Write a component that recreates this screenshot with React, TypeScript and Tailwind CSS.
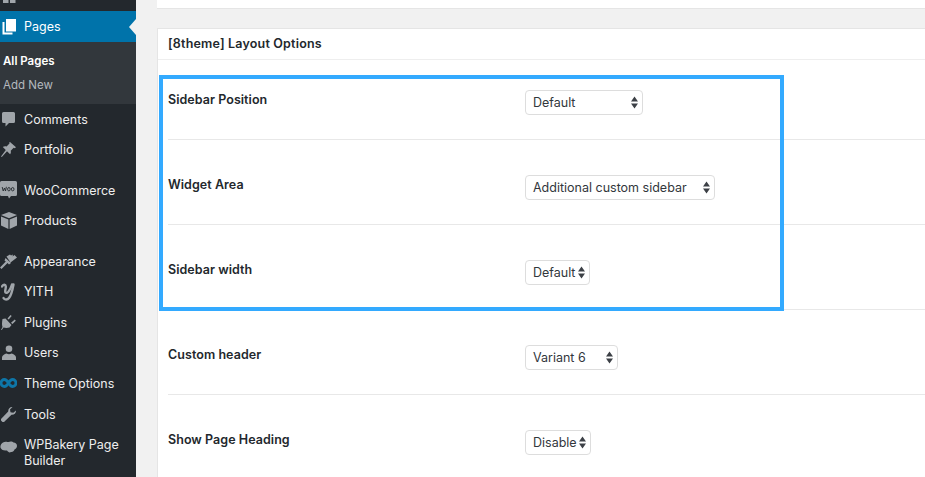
import type { ReactNode } from 'react';

const font = "font-['Inter','Noto_Sans',sans-serif]";

const PagesIcon = () => (
  <svg width="14" height="16" viewBox="0 0 14 16">
    <path d="M4 0h10v12.500H4z" fill="#fff" />
    <path d="M0.500 3h2v10.500h8V15.500H0.500z" fill="#fff" />
  </svg>
);
const CommentIcon = () => (
  <svg width="13" height="15" viewBox="0 0 13 15" fill="currentColor">
    <path d="M1.500 0h10A1.500 1.500 0 0 1 13 1.500v8A1.500 1.500 0 0 1 11.500 11H7l-3.500 3.500V11h-2A1.500 1.500 0 0 1 0 9.500v-8A1.500 1.500 0 0 1 1.500 0z" />
  </svg>
);
const PinIcon = () => (
  <svg width="15" height="15" viewBox="0 0 15 15" fill="currentColor">
    <path d="M9 0l6 5.200-1.300 1-1-.5-3 3c.4 1.300.2 2.600-.6 3.500L6 9.200 0.800 15 0 14.500 4.800 8 1.800 5c1-.8 2.400-1.100 3.700-.6l3-2.900-.3-1z" />
  </svg>
);
const WooIcon = () => (
  <svg width="17" height="18" viewBox="0 0 17 18">
    <path d="M1.500 0h14A1.500 1.500 0 0 1 17 1.500v12a1.500 1.500 0 0 1-1.500 1.500H11l-2 2.500-1-2.500H1.500A1.500 1.500 0 0 1 0 13.500v-12A1.500 1.500 0 0 1 1.500 0z" fill="currentColor" />
    <path d="M2.200 6l1 4 1.300-3 1 3 .9-4.200M7.600 8.200a1.300 1.700 0 1 0 2.600 0a1.300 1.700 0 1 0-2.600 0M11.400 8.200a1.300 1.700 0 1 0 2.600 0a1.300 1.700 0 1 0-2.600 0" fill="none" stroke="#23282d" strokeWidth="0.900" />
  </svg>
);
const BoxIcon = () => (
  <svg width="16" height="17" viewBox="0 0 16 17" fill="currentColor">
    <path d="M8 0l8 3-8 3.200L0 3zM0 4.500l7.400 3V17L0 13.500zM16 4.500v9L8.600 17V7.500z" />
  </svg>
);
const BrushIcon = () => (
  <svg width="17" height="15" viewBox="0 0 17 15" fill="currentColor">
    <path d="M6.500 2.500L10 0.500l1 1 2-1-.5 2 2-1.500 2.500 2.500-6.500 5zM5.500 4l5.500 5-2 1.500-1.500-1.500L1.500 15 0 13.500l5.800-6-1.300-1z" />
  </svg>
);
const YithIcon = () => (
  <svg width="15" height="18" viewBox="0 0 15 18" fill="none" stroke="currentColor" strokeLinecap="round">
    <path d="M1 3.500C2 1.500 4.500 1 4.800 3.500 5 6 3.500 8 4.500 9.500 6 11 9 8 11 1.500" strokeWidth="2.400" />
    <path d="M12.500 1.500C11.500 7 10.500 12 8 15c-1.500 2-4.500 2-5.500 0" strokeWidth="2.400" />
  </svg>
);
const PlugIcon = () => (
  <svg width="15" height="15" viewBox="0 0 15 15" fill="currentColor">
    <path d="M0 15l1.500-3C.700 10 1 7 1.500 4l3-.5 6 6.500-2 2.500c-2 .5-4 .5-6 0L.800 15zM6.500 3.500L9.500 0l1.200 1-3 3.500zM10 7.800L13.800 4.500l1 1.200-3.300 3.300z" />
  </svg>
);
const UserIcon = () => (
  <svg width="14" height="15" viewBox="0 0 14 15" fill="currentColor">
    <circle cx="7" cy="3.800" r="3.300" />
    <path d="M0 15v-2.500c0-2 2.500-3.500 4.500-4 1.500 1 3.500 1 5 0 2 .5 4.500 2 4.500 4V15z" />
  </svg>
);
const InfinityIcon = () => (
  <svg width="17" height="10" viewBox="0 0 17 10" fill="none" stroke="#0e76a8" strokeWidth="2.800">
    <path d="M8.500 5C7 2.500 6 1.500 4.500 1.500a3.500 3.500 0 0 0 0 7C6 8.500 7 7.500 8.500 5c1.500-2.500 2.500-3.500 4-3.500a3.500 3.500 0 0 1 0 7C11 8.500 10 7.500 8.500 5z" />
  </svg>
);
const WrenchIcon = () => (
  <svg width="15" height="15" viewBox="0 0 15 15" fill="currentColor">
    <path d="M15 3.500c.2 2-1.500 4.500-4.500 4.200L3 15H1.500L0 13.500V12l7.200-7.500C7 1.500 9.500-.2 11.500 0L9 2.500l.5 2.800 2.800.5z" />
  </svg>
);
const CloudIcon = () => (
  <svg width="17" height="12" viewBox="0 0 17 12" fill="currentColor">
    <path d="M3 1.500C5 0 7.500 1 8.500 1c2-1 4-.5 5 .5 2 0 3.500 1.500 3.500 3.500 0 2-1.500 3-2.500 3.500-.5 1.500-2 3-3.500 2.500-1.500 1-3 0-4-1.500C5 9.500 2 9.500 1 7.500-.5 5.500 1 2.500 3 1.500z" />
  </svg>
);

type MenuItem = { label: string; icon: ReactNode; spacing?: string };

const menu: MenuItem[] = [
  { label: 'Comments', icon: <CommentIcon /> },
  { label: 'Portfolio', icon: <PinIcon /> },
  { label: 'WooCommerce', icon: <WooIcon />, spacing: 'mt-[10px]' },
  { label: 'Products', icon: <BoxIcon /> },
  { label: 'Appearance', icon: <BrushIcon />, spacing: 'mt-[10px]' },
  { label: 'YITH', icon: <YithIcon /> },
  { label: 'Plugins', icon: <PlugIcon /> },
  { label: 'Users', icon: <UserIcon /> },
  { label: 'Theme Options', icon: <InfinityIcon /> },
  { label: 'Tools', icon: <WrenchIcon />, spacing: 'mt-[0.500px]' },
];

const rows = [
  { label: 'Sidebar Position', value: 'Default', width: 'w-[118px]' },
  { label: 'Widget Area', value: 'Additional custom sidebar', width: 'w-[190px]' },
  { label: 'Sidebar width', value: 'Default', width: 'w-[65px]' },
  { label: 'Custom header', value: 'Variant 6', width: 'w-[93px]' },
  { label: 'Show Page Heading', value: 'Disable', width: 'w-[66px]' },
];

function Select({ value, width }: { value: string; width: string }) {
  return (
    <div className={`${width} h-[25px] flex items-center justify-between pl-[7px] pr-[4px] bg-white border border-[#dddddd] rounded-[4px] text-[12.5px] text-[#32373c]`}>
      <span className="whitespace-nowrap pt-[2px]">{value}</span>
      <svg width="7" height="13" viewBox="0 0 7 13" fill="#3c4046" className="shrink-0">
        <path d="M3.500 0.500L7 5.500H0zM0 7.500h7L3.500 12.500z" />
      </svg>
    </div>
  );
}

export default function App() {
  return (
    <div className={`${font} relative w-[925px] h-[477px] overflow-hidden flex bg-[#f1f1f1]`}>
      {/* Sidebar */}
      <aside className="w-[136px] shrink-0 bg-[#23282d] text-[#eeeeee] text-[12.5px]">
        <div className="h-[11px] pl-[3px] overflow-hidden">
          <div className="-mt-[9px] w-[13px] h-[13px] text-[#a0a5aa]">
            <svg width="13" height="13" viewBox="0 0 13 13" fill="currentColor">
              <rect x="0" y="0" width="5.500" height="12" />
              <rect x="7" y="0" width="5.500" height="12" />
            </svg>
          </div>
        </div>
        <div className="relative h-[31px] bg-[#0073aa] flex items-center text-white">
          <span className="w-[17px] mr-[7px] flex justify-center">
            <PagesIcon />
          </span>
          <span className="pt-[2px]">Pages</span>
          <span className="absolute right-0 top-[8px] w-0 h-0 border-y-[8px] border-y-transparent border-r-[7px] border-r-[#f1f1f1]" />
        </div>
        <div className="h-[62px] bg-[#32373c] pt-[9px] pl-[3px] text-[11.5px]">
          <div className="h-[22px] flex items-center font-semibold text-white">All Pages</div>
          <div className="h-[26px] flex items-center text-[#b4b9be]">Add New</div>
        </div>
        {menu.map((item) => (
          <div key={item.label} className={`h-[30.500px] flex items-center ${item.spacing ?? ''}`}>
            <span className="w-[17px] mr-[7px] flex justify-center text-[#a0a5aa]">{item.icon}</span>
            <span className="pt-[2px]">{item.label}</span>
          </div>
        ))}
        <div className="flex leading-[16px]">
          <span className="w-[17px] mr-[7px] flex justify-center pt-[11px] text-[#a0a5aa]">
            <CloudIcon />
          </span>
          <span className="pt-[7.500px]">
            WPBakery Page
            <br />
            Builder
          </span>
        </div>
      </aside>

      {/* Content */}
      <main className="flex-1 pl-[21px]">
        <div className="h-[9px] bg-white border-b border-[#e5e5e5]" />
        <section className="mt-[19px] bg-white border-t border-l border-[#e5e5e5] h-[460px]">
          <h2 className="h-[31px] pl-[10px] flex items-center border-b border-[#eeeeee] text-[12.5px] tracking-[0.18px] font-semibold text-[#23282d]">
            [8theme] Layout Options
          </h2>
          <div className="pl-[10px]">
            {rows.map((row) => (
              <div key={row.label} className="h-[85px] first:h-[80px] flex items-end border-b border-[#e8e8e8] last:border-b-transparent">
                <div className="w-[357px] pb-[30px] text-[12.500px] tracking-[0.05px] leading-[18px] font-semibold text-[#23282d]">
                  {row.label}
                </div>
                <div className="pb-[24px]">
                  <Select value={row.value} width={row.width} />
                </div>
              </div>
            ))}
          </div>
        </section>
      </main>

      {/* Highlight box */}
      <div className="absolute left-[159px] top-[75px] w-[625px] h-[236px] border-[4px] border-[#33aaff]" />
    </div>
  );
}
